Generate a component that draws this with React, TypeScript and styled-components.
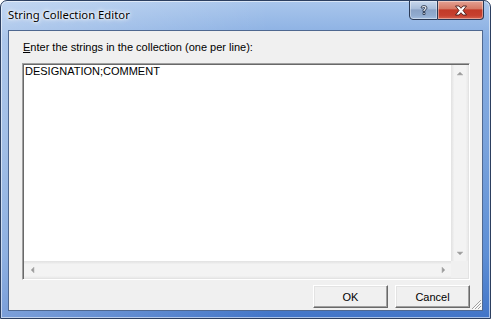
import React from 'react';
import styled, { createGlobalStyle } from 'styled-components';

const GlobalStyle = createGlobalStyle`
  html, body {
    margin: 0;
    padding: 0;
    background: #ffffff;
  }
`;

const Frame = styled.div`
  width: 491px;
  height: 319px;
  box-sizing: border-box;
  display: flex;
  flex-direction: column;
  padding: 0 7px 7px 7px;
  border: 1px solid #2c3f60;
  border-radius: 7px 7px 0 0;
  background:
    linear-gradient(90deg, rgba(255, 255, 255, 0.3) 0%, rgba(255, 255, 255, 0) 55%),
    linear-gradient(180deg, #a9c6ec 0%, #88aee2 12%, #7aa3dc 45%, #5e8fd5 80%, #4275c8 100%);
  box-shadow: inset 0 0 0 1px rgba(255, 255, 255, 0.55);
  overflow: hidden;
`;

const TitleBar = styled.div`
  height: 29px;
  display: flex;
  justify-content: space-between;
  align-items: flex-start;
`;

const Title = styled.div`
  margin-top: 6px;
  font-family: "Noto Sans", "Open Sans", sans-serif;
  font-size: 11.3px;
  color: #000;
  text-shadow: 0 0 6px #ffffff, 0 0 4px #ffffff, 0 0 2px #ffffff;
`;

const CaptionButtons = styled.div`
  display: flex;
  margin-top: -1px;
  margin-right: -1px;
`;

const CaptionButton = styled.div<{ $variant: 'help' | 'close' }>`
  width: ${p => (p.$variant === 'close' ? '46px' : '29px')};
  height: 20px;
  box-sizing: border-box;
  display: flex;
  align-items: center;
  justify-content: center;
  border: 1px solid #2b3a56;
  border-left: ${p => (p.$variant === 'close' ? 'none' : '1px solid #2b3a56')};
  border-radius: ${p => (p.$variant === 'close' ? '0 0 4px 0' : '0 0 0 4px')};
  background: ${p =>
    p.$variant === 'close'
      ? 'linear-gradient(180deg, #e4a193 0%, #d77a66 42%, #c23a28 50%, #c6402f 80%, #d5624e 100%)'
      : 'linear-gradient(180deg, #c9d8ec 0%, #a9bedb 42%, #8aa2c6 50%, #91abcf 80%, #a3bde0 100%)'};
  box-shadow: inset 0 0 0 1px rgba(255, 255, 255, 0.4);
`;

const Client = styled.div`
  flex: 1;
  display: flex;
  flex-direction: column;
  background: #f0f0f0;
  border: 1px solid #4f6890;
  padding: 10px 12px 10px 13px;
  font-family: "Liberation Sans", Arial, sans-serif;
  font-size: 11px;
  color: #000;
`;

const Label = styled.div`
  height: 13px;
  line-height: 13px;
  margin-bottom: 9px;
  padding-left: 1px;
`;

const Underlined = styled.span`
  text-decoration: underline;
`;

const TextBox = styled.div`
  flex: 1;
  display: grid;
  grid-template-columns: 1fr 17px;
  grid-template-rows: 1fr 17px;
  border-style: solid;
  border-width: 1px;
  border-color: #a0a0a0 #ffffff #ffffff #a0a0a0;
  box-shadow: inset 1px 1px 0 #696969, inset -1px -1px 0 #e3e3e3;
  padding: 1px;
  background: #ffffff;
`;

const TextArea = styled.div`
  padding: 0 1px;
  line-height: 13px;
  background: #ffffff;
`;

const VScroll = styled.div`
  display: flex;
  flex-direction: column;
  justify-content: space-between;
  background: linear-gradient(90deg, #e6e6e6 0%, #f3f3f3 15%, #f3f3f3 85%, #e9e9e9 100%);
  border-left: 1px solid #e4e4e4;
`;

const HScroll = styled.div`
  display: flex;
  justify-content: space-between;
  background: linear-gradient(180deg, #e6e6e6 0%, #f3f3f3 15%, #f3f3f3 85%, #e9e9e9 100%);
  border-top: 1px solid #e4e4e4;
`;

const Corner = styled.div`
  background: #f0f0f0;
`;

const ArrowCell = styled.div`
  width: 16px;
  height: 16px;
  display: flex;
  align-items: center;
  justify-content: center;
`;

const ButtonRow = styled.div`
  display: flex;
  justify-content: flex-end;
  gap: 7px;
  margin-top: 5px;
`;

const Button = styled.div`
  width: 75px;
  height: 23px;
  box-sizing: border-box;
  display: flex;
  align-items: center;
  justify-content: center;
  border-style: solid;
  border-width: 1px;
  border-color: #ffffff #696969 #696969 #ffffff;
  box-shadow: inset -1px -1px 0 #a0a0a0, inset 1px 1px 0 #e3e3e3;
  background: #f0f0f0;
  font-family: "Liberation Sans", Arial, sans-serif;
  font-size: 11px;
`;

const Grip = styled.div`
  align-self: flex-end;
  margin: -10px -12px -10px 0;
  width: 12px;
  height: 12px;
  display: flex;
`;

function Arrow({ dir }: { dir: 'up' | 'down' | 'left' | 'right' }) {
  const points = {
    up: '4,1 1,4 7,4',
    down: '1,1 7,1 4,4',
    left: '4,1 1,4 4,7',
    right: '1,1 4,4 1,7',
  }[dir];
  const vertical = dir === 'up' || dir === 'down';
  return (
    <svg width={vertical ? 8 : 5} height={vertical ? 5 : 8}>
      <polygon points={points} fill="#9a9a9a" stroke="#b8b8b8" strokeWidth="0.6" />
    </svg>
  );
}

export default function App() {
  return (
    <>
      <GlobalStyle />
      <Frame>
        <TitleBar>
          <Title>String Collection Editor</Title>
          <CaptionButtons>
            <CaptionButton $variant="help">
              <svg width="10" height="12" viewBox="0 0 10 12">
                <path
                  d="M2 4 Q2 1.5 5 1.5 Q8 1.5 8 4 Q8 5.5 6 6.3 L6 7.5 L4 7.5 L4 5.6 Q6 5 6 4 Q6 3.3 5 3.3 Q4 3.3 4 4 Z M4 8.5 H6 V10.5 H4 Z"
                  fill="#ffffff"
                  stroke="#2f3c55"
                  strokeWidth="0.9"
                />
              </svg>
            </CaptionButton>
            <CaptionButton $variant="close">
              <svg width="14" height="11" viewBox="0 0 14 11">
                <path
                  d="M1.5 1 H5 L7 3.3 L9 1 H12.5 L9 5.5 L12.5 10 H9 L7 7.7 L5 10 H1.5 L5 5.5 Z"
                  fill="#ffffff"
                  stroke="#4a1a16"
                  strokeWidth="0.9"
                />
              </svg>
            </CaptionButton>
          </CaptionButtons>
        </TitleBar>
        <Client>
          <Label>
            <Underlined>E</Underlined>nter the strings in the collection (one per line):
          </Label>
          <TextBox>
            <TextArea>DESIGNATION;COMMENT</TextArea>
            <VScroll>
              <ArrowCell><Arrow dir="up" /></ArrowCell>
              <ArrowCell><Arrow dir="down" /></ArrowCell>
            </VScroll>
            <HScroll>
              <ArrowCell><Arrow dir="left" /></ArrowCell>
              <ArrowCell><Arrow dir="right" /></ArrowCell>
            </HScroll>
            <Corner />
          </TextBox>
          <ButtonRow>
            <Button>OK</Button>
            <Button>Cancel</Button>
          </ButtonRow>
          <Grip>
            <svg width="12" height="12" viewBox="0 0 12 12">
              <path d="M11 2 L2 11 M11 5 L5 11 M11 8 L8 11" stroke="#a0a0a0" strokeWidth="1" />
              <path d="M11.8 2.8 L2.8 11.8 M11.8 5.8 L5.8 11.8 M11.8 8.8 L8.8 11.8" stroke="#ffffff" strokeWidth="1" />
            </svg>
          </Grip>
        </Client>
      </Frame>
    </>
  );
}
